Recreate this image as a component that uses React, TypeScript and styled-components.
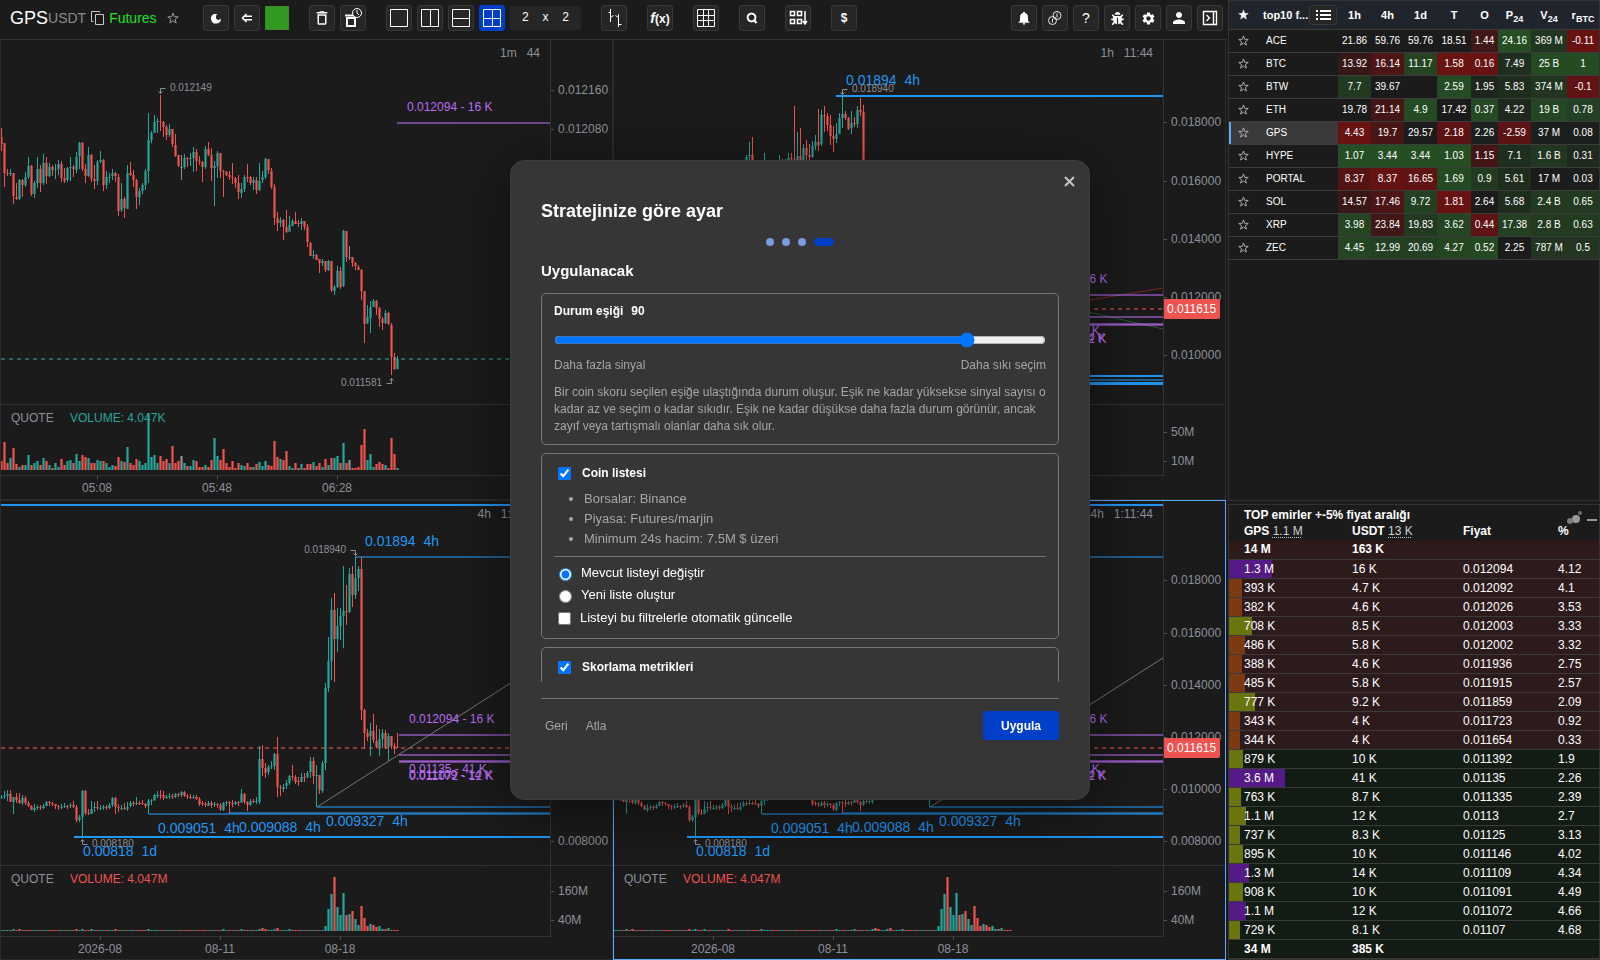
import React from 'react';
import styled, { createGlobalStyle, css } from 'styled-components';
import { MdNotifications, MdSettings, MdPerson, MdDeleteOutline } from 'react-icons/md';
import { FaBug } from 'react-icons/fa';

const GREEN = '#26a69a';
const RED = '#ef5350';
const GRAY = '#8f8f8f';
const BLUE = '#2196f3';
const PURPLE = '#b96cf2';
const MUTED = '#8d909a';
const LINE = '#333333';

const GlobalStyle = createGlobalStyle`
  * { box-sizing: border-box; }
  body {
    margin: 0;
    background: #1b1b1b;
    color: #ffffff;
    font-family: "Liberation Sans", Arial, sans-serif;
    font-size: 12px;
  }
  button, input { font-family: inherit; }
`;

/* ---------- page frame ---------- */

const Page = styled.div`
  display: flex;
  min-height: 100vh;
  gap: 2px;
`;

const Workspace = styled.main`
  flex: 1;
  min-width: 0;
  display: flex;
  flex-direction: column;
`;

const Side = styled.aside`
  width: 372px;
  flex: none;
  display: flex;
  flex-direction: column;
  gap: 3px;
`;

/* ---------- toolbar ---------- */

const Toolbar = styled.header`
  height: 40px;
  flex: none;
  display: flex;
  align-items: flex-start;
  justify-content: space-between;
  padding: 5px 3px 0 10px;
  border-bottom: 1px solid ${LINE};
`;

const Tools = styled.div<{ $gap?: number }>`
  display: flex;
  align-items: center;
  gap: ${(p) => p.$gap ?? 5}px;
`;

const Ticker = styled.div`
  display: flex;
  align-items: center;
  width: 193px;
  height: 26px;
  white-space: nowrap;
`;

const Base = styled.span`
  font-size: 18px;
  line-height: 26px;
`;

const Quote = styled.span`
  font-size: 14px;
  line-height: 28px;
  color: #8c8c8c;
`;

const Market = styled.span`
  font-size: 14px;
  line-height: 26px;
  color: #1fe01f;
`;

const PlainButton = styled.button`
  display: inline-flex;
  align-items: center;
  justify-content: center;
  border: 0;
  padding: 0 5px;
  background: none;
  color: #9a9a9a;
  line-height: 0;
`;

const ToolButton = styled.button<{ $active?: boolean }>`
  display: inline-flex;
  align-items: center;
  justify-content: center;
  width: 26px;
  height: 26px;
  flex: none;
  padding: 0;
  border: 1px solid ${(p) => (p.$active ? '#0040c8' : '#383838')};
  border-radius: 3px;
  background: ${(p) => (p.$active ? '#0040c8' : '#262626')};
  color: #ffffff;
  font-size: 12px;
  line-height: 1;
`;

const ColorSwatch = styled.button`
  width: 24px;
  height: 24px;
  padding: 0;
  border: 1px solid #3c8a2c;
  background: #2f9a1f;
`;

const GridSize = styled.div`
  display: flex;
  align-items: center;
  justify-content: space-between;
  width: 71px;
  height: 24px;
  padding: 0 12px 2px;
  border-radius: 3px;
  background: #262626;
  font-size: 12px;
`;

/* ---------- charts ---------- */

const ChartGrid = styled.div`
  flex: 1;
  display: grid;
  grid-template-columns: 1fr 1fr;
  grid-template-rows: 1fr 1fr;
`;

const Cell = styled.section<{ $active?: boolean; $first?: boolean }>`
  min-width: 0;
  display: flex;
  flex-direction: column;
  border: 1px solid ${(p) => (p.$active ? '#5aa9ff' : '#2b2b2b')};
  ${(p) => p.$first && css`border-top: 0;`}
`;

const Pane = styled.div<{ $volume?: boolean }>`
  display: flex;
  ${(p) => (p.$volume ? css`height: 71px; flex: none; border-top: 1px solid ${LINE};` : css`flex: 1; min-height: 300px;`)}
`;

const Plot = styled.svg`
  flex: 1;
  min-width: 0;
  height: auto;
  overflow: hidden;
  font-size: 12px;
`;

const AxisSvg = styled.svg`
  width: 62px;
  flex: none;
  height: auto;
  border-left: 1px solid ${LINE};
  overflow: hidden;
  font-size: 12px;
`;

const TimeAxis = styled.svg<{ $short?: boolean }>`
  flex: none;
  width: calc(100% - 61px);
  height: ${(p) => (p.$short ? 23 : 24)}px;
  border-top: 1px solid ${LINE};
  font-size: 12px;
`;

type Bar = number[];

/* Each entry: close, high, low, in thirds of a pixel; the open is the previous close. */
const MINUTE: Bar[] = [
  [310, 264, 333], [400, 308, 440], [402, 388, 410], [400, 388, 410], [470, 398, 492], [476, 430, 480], [420, 416, 478],
  [435, 416, 470], [410, 395, 440], [378, 350, 416], [462, 376, 468], [430, 424, 476], [388, 352, 444], [430, 376, 458],
  [370, 342, 434], [408, 350, 430], [382, 368, 410], [392, 376, 408], [388, 372, 416], [372, 360, 404], [414, 362, 426],
  [422, 384, 428], [385, 380, 424], [382, 352, 424], [388, 374, 410], [350, 335, 398], [310, 306, 386], [388, 306, 394],
  [408, 372, 430], [346, 320, 410], [418, 342, 426], [424, 376, 448], [366, 360, 434], [360, 334, 370], [436, 358, 454],
  [412, 392, 446], [410, 398, 428], [400, 388, 420], [410, 396, 426], [512, 402, 528], [478, 430, 518], [506, 472, 536],
  [398, 376, 508], [404, 366, 408], [420, 390, 440], [470, 416, 506], [452, 444, 494], [435, 430, 462], [392, 388, 452],
  [300, 220, 430], [278, 272, 308], [245, 224, 276], [244, 234, 280], [246, 166, 274], [262, 242, 290], [286, 256, 300],
  [268, 252, 292], [314, 266, 320], [346, 282, 352], [380, 344, 380], [380, 345, 420], [354, 342, 386], [356, 350, 380],
  [355, 340, 378], [336, 322, 398], [364, 326, 392], [366, 348, 376], [380, 362, 426], [326, 318, 388], [344, 306, 348],
  [384, 324, 424], [378, 362, 498], [340, 332, 412], [394, 338, 414], [396, 390, 472], [404, 394, 410], [410, 394, 420],
  [414, 368, 430], [430, 410, 444], [458, 404, 476], [446, 430, 476], [410, 406, 456], [412, 372, 426], [430, 408, 436],
  [420, 410, 448], [450, 412, 462], [422, 368, 452], [412, 394, 430], [358, 354, 416], [392, 358, 404], [440, 384, 446],
  [534, 432, 554], [550, 516, 572], [540, 530, 560], [562, 536, 600], [576, 510, 578], [556, 528, 570], [542, 538, 560],
  [550, 516, 552], [552, 540, 560], [544, 534, 570], [562, 542, 568], [608, 552, 620], [646, 606, 648], [644, 630, 656],
  [658, 642, 660], [670, 658, 700], [664, 656, 676], [692, 662, 696], [664, 660, 694], [752, 664, 756], [740, 734, 764],
  [692, 678, 744], [740, 680, 746], [574, 570, 740], [652, 574, 668], [652, 618, 660], [670, 650, 680], [680, 666, 690],
  [690, 676, 692], [752, 686, 780], [850, 752, 908], [832, 796, 852], [800, 782, 878], [782, 776, 800], [804, 780, 824],
  [838, 802, 862], [850, 832, 872], [820, 810, 852], [854, 816, 856], [950, 850, 1006], [986, 940, 990], [956, 948, 986],
];

const HOUR: Bar[] = [
  [470, 466, 500], [466, 426, 490], [500, 411, 510], [510, 500, 512], [511, 500, 512], [512, 500, 513], [490, 459, 510],
  [500, 490, 505], [501, 490, 505], [502, 490, 505], [503, 490, 505], [480, 466, 500], [484, 476, 490], [480, 476, 490],
  [474, 459, 490], [476, 459, 490], [480, 318, 490], [468, 396, 490], [484, 384, 490], [444, 432, 486], [464, 420, 484],
  [470, 432, 490], [438, 422, 474], [426, 404, 448], [434, 327, 452], [346, 330, 437], [348, 318, 396], [374, 339, 392],
  [408, 344, 435], [416, 378, 456], [402, 370, 430], [354, 339, 402], [342, 288, 384], [354, 334, 362], [386, 352, 390],
  [370, 333, 402], [371, 351, 382], [330, 318, 384], [336, 294, 348], [560, 315, 570],
];

const FOUR_HOUR: Bar[] = [
  [350, 346, 358], [349, 334, 358], [342, 330, 364], [366, 330, 366], [352, 352, 404], [360, 338, 368], [370, 340, 374],
  [354, 344, 374], [370, 348, 374], [378, 364, 382], [390, 376, 392], [384, 372, 396], [382, 376, 390], [384, 376, 390],
  [378, 372, 386], [366, 364, 378], [368, 362, 376], [372, 366, 378], [378, 372, 388], [382, 374, 390], [380, 372, 386],
  [378, 370, 384], [380, 374, 386], [376, 368, 384], [382, 362, 384], [420, 376, 428], [410, 404, 424], [332, 330, 468],
  [398, 330, 404], [400, 386, 404], [386, 364, 404], [382, 366, 396], [384, 364, 390], [383, 376, 390], [380, 374, 388],
  [384, 374, 390], [376, 370, 388], [354, 350, 380], [382, 350, 400], [386, 372, 396], [384, 374, 390], [385, 370, 392],
  [380, 366, 392], [370, 362, 380], [372, 364, 378], [368, 350, 374], [370, 364, 376], [372, 360, 376], [378, 368, 384],
  [362, 356, 402], [360, 356, 374], [346, 342, 364], [344, 334, 354], [346, 330, 356], [354, 334, 362], [350, 344, 356],
  [348, 338, 356], [350, 342, 358], [342, 340, 354], [346, 338, 350], [336, 332, 350], [348, 334, 352], [350, 342, 356],
  [354, 342, 358], [350, 346, 358], [356, 346, 362], [370, 352, 378], [372, 362, 378], [376, 366, 382], [368, 362, 376],
  [374, 362, 384], [372, 366, 380], [376, 368, 382], [388, 370, 394], [368, 366, 392], [367, 362, 376], [368, 362, 398],
  [372, 360, 380], [366, 362, 374], [370, 362, 378], [342, 328, 368], [366, 340, 374], [374, 362, 392], [362, 358, 378],
  [366, 358, 370], [364, 350, 370], [236, 198, 372], [264, 196, 290], [278, 250, 296], [262, 254, 284], [258, 244, 268],
  [222, 218, 270], [322, 170, 350], [326, 314, 348], [320, 312, 336], [310, 300, 326], [288, 284, 314], [290, 256, 300],
  [304, 286, 314], [305, 290, 318], [290, 280, 308], [291, 278, 306], [278, 272, 294], [244, 232, 294], [290, 232, 312],
  [286, 254, 380], [332, 284, 342], [248, 244, 340], [24, 10, 270], [-56, -130, 34], [-210, -246, 0], [-124, -260, 8],
  [-162, -215, -84], [-192, -215, -120], [-206, -342, -96], [-204, -286, -166], [-318, -336, -200], [-256, -342, -220],
  [-306, -370, -244], [-332, -342, -266], [90, -368, 122], [158, 86, 206], [170, 146, 182], [154, 130, 230],
  [182, 102, 190], [200, 136, 206], [176, 146, 228], [158, 148, 206], [202, 150, 206], [168, 158, 242], [198, 168, 206],
  [202, 190, 222], [204, 160, 206],
];

const MINUTE_VOLUME = [
  9, 28, 7, 12, 22, 6, 3, 5, 5, 15, 5, 7, 9, 5, 12, 9, 5, 2, 7, 3, 11, 5, 9, 10, 7, 16, 9, 15, 13, 12, 7, 7, 10, 9, 9,
  7, 3, 5, 4, 13, 9, 8, 23, 7, 5, 11, 9, 5, 7, 57, 13, 15, 7, 14, 9, 11, 7, 24, 7, 9, 14, 7, 4, 4, 10, 9, 3, 3, 5, 3,
  10, 32, 14, 10, 21, 7, 3, 9, 2, 7, 5, 4, 7, 3, 3, 6, 8, 4, 9, 5, 4, 29, 13, 11, 10, 19, 4, 2, 7, 2, 6, 2, 6, 6, 8,
  4, 7, 3, 11, 5, 12, 12, 14, 7, 27, 7, 10, 2, 2, 3, 25, 41, 10, 16, 3, 6, 8, 6, 5, 2, 32, 16, 2,
];

const FOUR_HOUR_VOLUME = Array.from({ length: 133 }, (_, i) => {
  const spikes: Record<number, number> = {
    4: 2, 6: 2, 25: 2, 27: 2, 30: 2, 38: 2, 49: 2, 74: 2, 80: 2, 86: 2, 87: 3, 88: 2, 91: 2, 92: 3, 96: 2, 108: 5,
    109: 22, 110: 37, 111: 54, 112: 24, 113: 16, 114: 38, 115: 16, 116: 17, 117: 20, 118: 12, 119: 6, 120: 25,
    121: 13, 122: 5, 123: 7, 124: 6, 125: 4, 126: 5, 127: 2, 128: 2, 129: 3,
  };
  return spikes[i] ?? 1;
});

const direction = (open: number, close: number) => (close === open ? GRAY : close < open ? GREEN : RED);

function Candles({ bars, open, top, from = 0 }: { bars: Bar[]; open: number; top: number; from?: number }) {
  return (
    <g shapeRendering="crispEdges">
      {bars.map(([close, high, low], i) => {
        const start = i ? bars[i - 1][0] : open;
        const color = direction(start, close);
        const x = (from + i) * 3;
        const y = Math.round(top + Math.min(start, close) / 3);
        const h = Math.max(1, Math.round(Math.abs(start - close) / 3));
        return (
          <g key={i} fill={color}>
            <rect x={x - 1} y={y} width={3} height={h} opacity={0.6} />
            <rect x={x} y={Math.round(top + high / 3)} width={1} height={Math.max(1, Math.round((low - high) / 3))} />
          </g>
        );
      })}
    </g>
  );
}

function Volumes({ heights, bars, open }: { heights: number[]; bars: Bar[]; open: number }) {
  return (
    <g shapeRendering="crispEdges">
      {heights.map((h, i) => {
        const color = direction(i ? bars[i - 1][0] : open, bars[i][0]);
        return (
          <g key={i} fill={color}>
            <rect x={i * 3 - 1} y={65 - h} width={3} height={h} opacity={0.6} />
            <rect x={i * 3} y={65 - h} width={1} height={h} />
          </g>
        );
      })}
    </g>
  );
}

function Level({ x, y, color = BLUE, dim, size = 2 }: { x: number; y: number; color?: string; dim?: boolean; size?: number }) {
  return <rect x={x} y={y} width="100%" height={size} fill={color} opacity={dim ? 0.55 : 1} shapeRendering="crispEdges" />;
}

function PriceLine({ y, color }: { y: number; color: string }) {
  return <line x1={0} x2="100%" y1={y} y2={y} stroke={color} strokeWidth={2} strokeDasharray="4 4" opacity={0.55} />;
}

function LevelText({ x, y, children }: { x: number; y: number; children: string }) {
  return <text x={x} y={y} fontSize={14} fill={BLUE}>{children}</text>;
}

function OrderText({ x, y, children }: { x: number; y: number; children: string }) {
  return <text x={x} y={y} fontSize={12} fill={PURPLE}>{children}</text>;
}

/* A small bent arrow with the extreme price beside it. */
function Extreme({ x, y, left, up, price }: { x: number; y: number; left?: boolean; up?: boolean; price: string }) {
  const side = left ? -5 : 5;
  const tip = up ? -5 : 5;
  return (
    <g>
      <path
        d={`M${x + side} ${y}H${x}v${tip}M${x - 2} ${y + tip - Math.sign(tip) * 2}l2 ${Math.sign(tip) * 2}l2 ${-Math.sign(tip) * 2}`}
        transform="translate(0.5 0.5)"
        stroke={MUTED}
        fill="none"
      />
      <text x={left ? x - 9 : x + 10} y={y + 3} fontSize={10} fill={MUTED} textAnchor={left ? 'end' : 'start'}>{price}</text>
    </g>
  );
}

function Axis({ labels, badge }: { labels: [number, string][]; badge?: [number, string] }) {
  return (
    <AxisSvg>
      {labels.map(([y, t]) => (
        <g key={t}>
          <rect x={0} y={y} width={3} height={1} fill="#555555" />
          <text x={7} y={y + 4} fill={MUTED}>{t}</text>
        </g>
      ))}
      {badge && (
        <g>
          <rect x={-3} y={badge[0] - 10} width={59} height={20} rx={2} fill={RED} />
          <text x={3} y={badge[0] + 4} fill="#ffffff">{badge[1]}</text>
        </g>
      )}
    </AxisSvg>
  );
}

function Times({ labels, short }: { labels: [number, string][]; short?: boolean }) {
  return (
    <TimeAxis $short={short}>
      {labels.map(([x, t]) => (
        <g key={t}>
          <rect x={x} y={0} width={1} height={3} fill="#555555" />
          <text x={x} y={16} fill={MUTED} textAnchor="middle">{t}</text>
        </g>
      ))}
    </TimeAxis>
  );
}

function Countdown({ y, children }: { y: number; children: string }) {
  return (
    <svg x="100%" overflow="visible">
      <text x={-10} y={y} textAnchor="end" fill={MUTED}>{children}</text>
    </svg>
  );
}

function VolumeTitle({ value, color }: { value: string; color: string }) {
  return (
    <g>
      <text x={10} y={17} fill={MUTED}>QUOTE</text>
      <text x={69} y={17} fill={color}>{`VOLUME: ${value}`}</text>
    </g>
  );
}

const wide = '\u00a0\u00a0';

function MinuteChart() {
  return (
    <Cell $first>
      <Pane>
        <Plot>
          <PriceLine y={319} color={GREEN} />
          <Candles bars={MINUTE} open={290} top={0} />
          <Level x={396} y={82} color={PURPLE} dim />
          <OrderText x={406} y={71}>0.012094 - 16 K</OrderText>
          <Extreme x={159} y={48} price="0.012149" />
          <Extreme x={390} y={343} left up price="0.011581" />
          <Countdown y={17}>{`1m${wide}\u00a044`}</Countdown>
        </Plot>
        <Axis labels={[[50, '0.012160'], [89, '0.012080']]} />
      </Pane>
      <Pane $volume>
        <Plot>
          <VolumeTitle value="4.047K" color={GREEN} />
          <Volumes heights={MINUTE_VOLUME} bars={MINUTE} open={290} />
        </Plot>
        <Axis labels={[]} />
      </Pane>
      <Times labels={[[96, '05:08'], [216, '05:48'], [336, '06:28']]} />
    </Cell>
  );
}

function HourChart() {
  return (
    <Cell $first>
      <Pane>
        <Plot>
          <PriceLine y={269} color={RED} />
          <Candles bars={HOUR} open={500} top={-40} from={44} />
          <Level x={222} y={55} />
          <LevelText x={232} y={45}>{`0.01894${wide}4h`}</LevelText>
          <Extreme x={228} y={49} price="0.018940" />
          <path d="M356 280L549 248" stroke="#7a2a2a" fill="none" />
          <path d="M356 245L549 289" stroke="#245c2a" fill="none" />
          <Level x={396} y={254} color={PURPLE} dim />
          <Level x={396} y={276} color={PURPLE} dim />
          <Level x={396} y={283} color={PURPLE} dim size={3} />
          <Level x={396} y={284} color={PURPLE} dim size={1} />
          <OrderText x={408} y={243}>0.012094 - 16 K</OrderText>
          <OrderText x={408} y={295}>0.01135 - 41 K</OrderText>
          <OrderText x={408} y={302}>0.011109 - 14 K</OrderText>
          <OrderText x={408} y={303}>0.011072 - 12 K</OrderText>
          <Level x={0} y={335} />
          <Level x={0} y={339} dim />
          <Level x={0} y={342} size={3} />
          <Countdown y={17}>{`1h${wide}\u00a011:44`}</Countdown>
        </Plot>
        <Axis
          labels={[[82, '0.018000'], [141, '0.016000'], [199, '0.014000'], [257, '0.012000'], [315, '0.010000']]}
          badge={[269, '0.011615']}
        />
      </Pane>
      <Pane $volume>
        <Plot />
        <Axis labels={[[27, '50M'], [56, '10M']]} />
      </Pane>
      <Times labels={[]} />
    </Cell>
  );
}

function FourHourChart({ active }: { active?: boolean }) {
  return (
    <Cell $active={active}>
      <Pane>
        <Plot>
          <PriceLine y={247} color={RED} />
          <Candles bars={FOUR_HOUR} open={352} top={179} />
          <Level x={0} y={3} />
          <Level x={354} y={55} dim />
          <LevelText x={364} y={45}>{`0.01894${wide}4h`}</LevelText>
          <Extreme x={354} y={49} left price="0.018940" />
          <path d="M316 306L1016 -142" stroke="#767676" fill="none" />
          <Level x={398} y={233} color={PURPLE} dim />
          <Level x={398} y={253} color={PURPLE} dim />
          <Level x={398} y={259} color={PURPLE} dim size={3} />
          <Level x={398} y={260} color={PURPLE} dim size={1} />
          <OrderText x={408} y={222}>0.012094 - 16 K</OrderText>
          <OrderText x={408} y={272}>0.01135 - 41 K</OrderText>
          <OrderText x={408} y={278}>0.011109 - 14 K</OrderText>
          <OrderText x={408} y={279}>0.011072 - 12 K</OrderText>
          <Level x={316} y={305} dim />
          <Level x={228} y={311} dim />
          <Level x={148} y={312} dim />
          <Level x={73} y={335} />
          <LevelText x={157} y={332}>{`0.009051${wide}4h`}</LevelText>
          <LevelText x={238} y={331}>{`0.009088${wide}4h`}</LevelText>
          <LevelText x={325} y={325}>{`0.009327${wide}4h`}</LevelText>
          <Extreme x={81} y={343} up price="0.008180" />
          <LevelText x={82} y={355}>{`0.00818${wide}1d`}</LevelText>
          <Countdown y={17}>{`4h${wide}\u00a01:11:44`}</Countdown>
        </Plot>
        <Axis
          labels={[[79, '0.018000'], [132, '0.016000'], [184, '0.014000'], [236, '0.012000'], [288, '0.010000'], [340, '0.008000']]}
          badge={[247, '0.011615']}
        />
      </Pane>
      <Pane $volume>
        <Plot>
          <VolumeTitle value="4.047M" color={RED} />
          <Volumes heights={FOUR_HOUR_VOLUME} bars={FOUR_HOUR} open={352} />
        </Plot>
        <Axis labels={[[25, '160M'], [54, '40M']]} />
      </Pane>
      <Times short labels={[[99, '2026-08'], [219, '08-11'], [339, '08-18']]} />
    </Cell>
  );
}

/* ---------- watch list ---------- */

const Panel = styled.section<{ $grow?: boolean }>`
  border: 1px solid ${LINE};
  ${(p) => p.$grow && css`flex: 1;`}
`;

const WatchTable = styled.table`
  width: 100%;
  table-layout: fixed;
  border-collapse: collapse;
  font-size: 10px;
`;

const WatchHead = styled.th<{ $left?: boolean }>`
  height: 28px;
  padding: 0;
  border-bottom: 1px solid #3c3c3c;
  background: #20252d;
  font-size: 11px;
  font-weight: bold;
  line-height: 12px;
  text-align: ${(p) => (p.$left ? 'left' : 'center')};
  white-space: nowrap;

  sub { font-size: 9px; line-height: 0; }
`;

const NameHead = styled.div`
  display: flex;
  align-items: center;
  justify-content: space-between;
  padding: 0 1px 0 5px;
`;

const ListButton = styled(ToolButton)`
  width: 28px;
  height: 20px;
`;

const WatchRow = styled.tr<{ $active?: boolean }>`
  height: 23px;
  background: ${(p) => (p.$active ? '#3a3a3a' : 'transparent')};
  ${(p) => p.$active && css`box-shadow: inset 2px 0 0 #5aa9ff;`}
`;

const WatchCell = styled.td<{ $tint?: string; $left?: boolean }>`
  padding: ${(p) => (p.$left ? '0 0 0 8px' : '0')};
  border-bottom: 1px solid #3c3c3c;
  background: ${(p) => p.$tint ?? 'transparent'};
  text-align: ${(p) => (p.$left ? 'left' : 'center')};
  white-space: nowrap;
`;

const StarButton = styled.button`
  display: block;
  margin: 0 auto;
  padding: 0;
  border: 0;
  background: none;
  line-height: 0;
`;

/* Strength from -1 (red) to 1 (green), mixed over the panel colour. */
const tint = (v: number) => {
  const to = v < 0 ? [104, 18, 18] : [38, 78, 36];
  const mix = to.map((c) => Math.round(27 + (c - 27) * Math.abs(v)));
  return `rgb(${mix.join(',')})`;
};

const WATCH: { name: string; cells: [string, number][] }[] = [
  { name: 'ACE', cells: [['21.86', 0], ['59.76', 0], ['59.76', 0], ['18.51', 0], ['1.44', -0.5], ['24.16', 1], ['369 M', 0.5], ['-0.11', -1]] },
  { name: 'BTC', cells: [['13.92', -0.35], ['16.14', -0.65], ['11.17', 0.8], ['1.58', -1], ['0.16', -1], ['7.49', 0.4], ['25 B', 0.95], ['1', 0.95]] },
  { name: 'BTW', cells: [['7.7', 0.6], ['39.67', 0], ['', 0], ['2.59', 0.95], ['1.95', 0.2], ['5.83', 0.35], ['374 M', 0.5], ['-0.1', -0.9]] },
  { name: 'ETH', cells: [['19.78', 0], ['21.14', -0.55], ['4.9', 0.95], ['17.42', 0], ['0.37', 0.9], ['4.22', 0.25], ['19 B', 0.85], ['0.78', 0.75]] },
  { name: 'GPS', cells: [['4.43', -1], ['19.7', -0.6], ['29.57', 0.01], ['2.18', -0.85], ['2.26', 0.1], ['-2.59', -0.85], ['37 M', 0.1], ['0.08', 0.1]] },
  { name: 'HYPE', cells: [['1.07', 1], ['3.44', 1], ['3.44', 1], ['1.03', 1], ['1.15', -0.55], ['7.1', 0.4], ['1.6 B', 0.55], ['0.31', 0.3]] },
  { name: 'PORTAL', cells: [['8.37', -0.75], ['8.37', -0.95], ['16.65', -0.9], ['1.69', 0.9], ['0.9', 0.6], ['5.61', 0.35], ['17 M', 0], ['0.03', 0.05]] },
  { name: 'SOL', cells: [['14.57', -0.4], ['17.46', -0.65], ['9.72', 0.75], ['1.81', -1], ['2.64', 0], ['5.68', 0.35], ['2.4 B', 0.6], ['0.65', 0.6]] },
  { name: 'XRP', cells: [['3.98', 0.8], ['23.84', -0.5], ['19.83', 0.6], ['3.62', 0.8], ['0.44', -0.9], ['17.38', 0.75], ['2.8 B', 0.6], ['0.63', 0.6]] },
  { name: 'ZEC', cells: [['4.45', 0.8], ['12.99', 0.75], ['20.69', 0.75], ['4.27', 0.8], ['0.52', 0.9], ['2.25', 0], ['787 M', 0.5], ['0.5', 0.5]] },
];

function Star({ filled, size = 11 }: { filled?: boolean; size?: number }) {
  return (
    <svg width={size} height={size} viewBox="0 0 12 12">
      <path
        d="M6 1l1.300 3.700 3.900.1-3.100 2.400 1.100 3.800L6 8.800 2.800 11l1.100-3.800L.8 4.800l3.900-.1z"
        fill={filled ? '#ffffff' : 'none'}
        stroke={filled ? '#ffffff' : '#b4b4b4'}
        strokeWidth={filled ? 0.5 : 1}
      />
    </svg>
  );
}

function WatchList() {
  return (
    <Panel $grow>
      <WatchTable>
        <colgroup>
          <col style={{ width: 29 }} />
          <col />
          {[33, 33, 33, 34, 27, 33, 36, 32].map((w, i) => <col key={i} style={{ width: w }} />)}
        </colgroup>
        <thead>
          <tr>
            <WatchHead><StarButton aria-label="Favoriler"><Star filled /></StarButton></WatchHead>
            <WatchHead $left>
              <NameHead>
                top10 f...
                <ListButton aria-label="Liste">
                  <svg width="16" height="12" fill="#ffffff">
                    <path d="M1 1h2v2H1zM5 1h11v2H5zM1 5h2v2H1zM5 5h11v2H5zM1 9h2v2H1zM5 9h11v2H5z" />
                  </svg>
                </ListButton>
              </NameHead>
            </WatchHead>
            <WatchHead>1h</WatchHead>
            <WatchHead>4h</WatchHead>
            <WatchHead>1d</WatchHead>
            <WatchHead>T</WatchHead>
            <WatchHead>O</WatchHead>
            <WatchHead>P<sub>24</sub></WatchHead>
            <WatchHead>V<sub>24</sub></WatchHead>
            <WatchHead>r<sub>BTC</sub></WatchHead>
          </tr>
        </thead>
        <tbody>
          {WATCH.map((row) => (
            <WatchRow key={row.name} $active={row.name === 'GPS'}>
              <WatchCell><StarButton aria-label={`Favori ${row.name}`}><Star /></StarButton></WatchCell>
              <WatchCell $left>{row.name}</WatchCell>
              {row.cells.map(([text, v], i) => (
                <WatchCell key={i} $tint={tint(v)}>{text}</WatchCell>
              ))}
            </WatchRow>
          ))}
        </tbody>
      </WatchTable>
    </Panel>
  );
}

/* ---------- order book ---------- */

const OrdersTitle = styled.div`
  display: flex;
  justify-content: space-between;
  height: 18px;
  padding: 0 2px 0 15px;
  font-weight: bold;
  line-height: 20px;
`;

const OrdersTable = styled.table`
  width: 100%;
  table-layout: fixed;
  border-collapse: collapse;
  line-height: 17px;

  th { text-align: left; height: 18px; padding: 0; }
  th:first-child { padding-left: 15px; }
  th u { font-weight: normal; text-decoration: underline dotted; text-underline-offset: 2px; color: #d0d0d0; }
`;

const OrderRow = styled.tr<{ $side: 'ask' | 'bid'; $total?: boolean }>`
  height: 19px;
  background: ${(p) => (p.$side === 'ask' ? '#2d1b1c' : '#131c14')};
  font-weight: ${(p) => (p.$total ? 'bold' : 'normal')};

  td { padding: 0; border-bottom: 1px solid #3a3a3a; }
`;

const Amount = styled.td<{ $bar?: number; $color?: string }>`
  && {
    padding-left: 15px;
    background: ${(p) => (p.$bar ? `linear-gradient(${p.$color}, ${p.$color}) 0 0 / ${p.$bar}px 100% no-repeat` : 'none')};
  }
`;

const VIOLET = '#541a86';
const RUST = '#7b3a12';
const OLIVE = '#6a750f';

const ORDERS: [string, string, string, string, number, string][] = [
  ['1.3 M', '16 K', '0.012094', '4.12', 43, VIOLET],
  ['393 K', '4.7 K', '0.012092', '4.1', 13, RUST],
  ['382 K', '4.6 K', '0.012026', '3.53', 13, RUST],
  ['708 K', '8.5 K', '0.012003', '3.33', 23, OLIVE],
  ['486 K', '5.8 K', '0.012002', '3.32', 16, RUST],
  ['388 K', '4.6 K', '0.011936', '2.75', 13, RUST],
  ['485 K', '5.8 K', '0.011915', '2.57', 16, RUST],
  ['777 K', '9.2 K', '0.011859', '2.09', 26, OLIVE],
  ['343 K', '4 K', '0.011723', '0.92', 11, RUST],
  ['344 K', '4 K', '0.011654', '0.33', 11, RUST],
  ['879 K', '10 K', '0.011392', '1.9', 14, OLIVE],
  ['3.6 M', '41 K', '0.01135', '2.26', 56, VIOLET],
  ['763 K', '8.7 K', '0.011335', '2.39', 12, OLIVE],
  ['1.1 M', '12 K', '0.0113', '2.7', 17, OLIVE],
  ['737 K', '8.3 K', '0.01125', '3.13', 11, OLIVE],
  ['895 K', '10 K', '0.011146', '4.02', 14, OLIVE],
  ['1.3 M', '14 K', '0.011109', '4.34', 20, VIOLET],
  ['908 K', '10 K', '0.011091', '4.49', 14, OLIVE],
  ['1.1 M', '12 K', '0.011072', '4.66', 17, VIOLET],
  ['729 K', '8.1 K', '0.01107', '4.68', 11, OLIVE],
];

function Orders() {
  return (
    <Panel>
      <OrdersTitle>
        TOP emirler +-5% fiyat aralığı
        <svg width="30" height="20" fill="#9a9a9a">
          <circle cx="9" cy="14" r="4" />
          <circle cx="3" cy="16" r="3" fill="#7c7c7c" />
          <circle cx="13" cy="8" r="2" fill="#6c6c6c" />
          <rect x="20" y="14" width="10" height="2" />
        </svg>
      </OrdersTitle>
      <OrdersTable>
        <colgroup>
          <col style={{ width: 123 }} />
          <col style={{ width: 111 }} />
          <col style={{ width: 95 }} />
          <col />
        </colgroup>
        <thead>
          <tr>
            <th>GPS <u>1.1 M</u></th>
            <th>USDT <u>13 K</u></th>
            <th>Fiyat</th>
            <th>%</th>
          </tr>
        </thead>
        <tbody>
          <OrderRow $side="ask" $total><Amount>14 M</Amount><td>163 K</td><td /><td /></OrderRow>
          {ORDERS.map(([amount, usdt, price, pct, bar, color], i) => (
            <OrderRow key={i} $side={i < 10 ? 'ask' : 'bid'}>
              <Amount $bar={bar} $color={color}>{amount}</Amount>
              <td>{usdt}</td>
              <td>{price}</td>
              <td>{pct}</td>
            </OrderRow>
          ))}
          <OrderRow $side="bid" $total><Amount>34 M</Amount><td>385 K</td><td /><td /></OrderRow>
        </tbody>
      </OrdersTable>
    </Panel>
  );
}

/* ---------- dialog ---------- */

const Overlay = styled.div`
  position: fixed;
  inset: 0;
  display: flex;
  align-items: center;
  justify-content: center;
`;

const Dialog = styled.div`
  position: relative;
  display: flex;
  flex-direction: column;
  width: 580px;
  max-width: 100%;
  height: 640px;
  max-height: 100%;
  padding: 30px;
  border: 1px solid #3d3d3d;
  border-radius: 14px;
  background: #363636;
  box-shadow: 0 10px 60px rgba(0, 0, 0, 0.5);
`;

const CloseButton = styled.button`
  position: absolute;
  top: 10px;
  right: 10px;
  width: 20px;
  height: 20px;
  padding: 0;
  border: 0;
  background: none;
  line-height: 0;
`;

const Title = styled.h2`
  margin: 0;
  font-size: 18px;
  line-height: 40px;
`;

const Steps = styled.div`
  display: flex;
  justify-content: center;
  gap: 8px;
  margin: 7px 0 11px;
`;

const Step = styled.span<{ $current?: boolean }>`
  width: ${(p) => (p.$current ? 20 : 8)}px;
  height: 8px;
  border-radius: 4px;
  background: ${(p) => (p.$current ? '#0040c8' : '#7b98e3')};
`;

const Scroll = styled.div`
  flex: 1;
  min-height: 0;
  overflow: hidden;
`;

const Subtitle = styled.h3`
  margin: 0 0 8px;
  font-size: 15px;
  line-height: 28px;
`;

const Card = styled.section`
  margin-bottom: 8px;
  padding: 9px 12px 8px;
  border: 1px solid #767676;
  border-radius: 5px;
`;

const ThresholdLabel = styled.label`
  display: flex;
  gap: 8px;
  font-weight: bold;
  line-height: 17px;
`;

const Range = styled.input`
  display: block;
  width: 100%;
  height: 16px;
  margin: 12px 0 9px;
`;

const RangeEnds = styled.div`
  display: flex;
  justify-content: space-between;
  color: #a6a6a6;
  line-height: 17px;
`;

const Note = styled.p`
  margin: 10px 0 1px;
  color: #a6a6a6;
  line-height: 17px;
`;

const CheckHead = styled.label`
  display: flex;
  align-items: center;
  gap: 11px;
  padding-left: 4px;
  font-weight: bold;
  line-height: 21px;

  input { margin: 0; }
`;

const Filters = styled.ul`
  margin: 5px 0 7px;
  padding-left: 30px;
  color: #a6a6a6;
  font-size: 13px;
  line-height: 20px;
`;

const Options = styled.div`
  padding-top: 5px;
  border-top: 1px solid #767676;
  font-size: 13px;
`;

const Option = styled.label<{ $check?: boolean }>`
  display: flex;
  align-items: center;
  gap: 9px;
  padding-left: ${(p) => (p.$check ? 4 : 5)}px;
  line-height: ${(p) => (p.$check ? 24 : 22)}px;

  input { margin: ${(p) => (p.$check ? 0 : '3px 0 0')}; }
`;

const Footer = styled.footer`
  display: flex;
  justify-content: space-between;
  align-items: flex-start;
  margin-top: 16px;
  padding: 12px 0 29px;
  border-top: 1px solid #767676;
`;

const TextButton = styled.button`
  height: 29px;
  padding: 0 4px;
  margin-right: 10px;
  border: 0;
  background: none;
  color: #a6a6a6;
  font-size: 12px;
`;

const ApplyButton = styled.button`
  width: 76px;
  height: 29px;
  border: 0;
  border-radius: 3px;
  background: #0040c8;
  color: #ffffff;
  font-size: 12px;
  font-weight: bold;
`;

function StrategyDialog() {
  return (
    <Overlay>
      <Dialog role="dialog" aria-labelledby="dialog-title">
        <CloseButton aria-label="Kapat">
          <svg width="11" height="11" stroke="#c4c4c4" strokeWidth="2"><path d="M1 1l9 9M10 1l-9 9" /></svg>
        </CloseButton>
        <Title id="dialog-title">Stratejinize göre ayar</Title>
        <Steps><Step /><Step /><Step /><Step $current /></Steps>
        <Scroll>
          <Subtitle>Uygulanacak</Subtitle>
          <Card>
            <ThresholdLabel htmlFor="threshold"><span>Durum eşiği</span><span>90</span></ThresholdLabel>
            <Range id="threshold" type="range" min={50} max={97} defaultValue={90} />
            <RangeEnds><span>Daha fazla sinyal</span><span>Daha sıkı seçim</span></RangeEnds>
            <Note>
              Bir coin skoru seçilen eşiğe ulaştığında durum oluşur. Eşik ne kadar yüksekse sinyal sayısı o kadar az ve
              seçim o kadar sıkıdır. Eşik ne kadar düşükse daha fazla durum görünür, ancak zayıf veya tartışmalı olanlar
              daha sık olur.
            </Note>
          </Card>
          <Card>
            <CheckHead><input type="checkbox" defaultChecked />Coin listesi</CheckHead>
            <Filters>
              <li>Borsalar: Binance</li>
              <li>Piyasa: Futures/marjin</li>
              <li>Minimum 24s hacim: 7.5M $ üzeri</li>
            </Filters>
            <Options>
              <Option><input type="radio" name="list" defaultChecked />Mevcut listeyi değiştir</Option>
              <Option><input type="radio" name="list" />Yeni liste oluştur</Option>
              <Option $check><input type="checkbox" />Listeyi bu filtrelerle otomatik güncelle</Option>
            </Options>
          </Card>
          <Card>
            <CheckHead><input type="checkbox" defaultChecked />Skorlama metrikleri</CheckHead>
            <Filters />
          </Card>
        </Scroll>
        <Footer>
          <div><TextButton>Geri</TextButton><TextButton>Atla</TextButton></div>
          <ApplyButton>Uygula</ApplyButton>
        </Footer>
      </Dialog>
    </Overlay>
  );
}

/* ---------- toolbar content ---------- */

function Glyph({ d, size = 20, width = 1, fill }: { d: string; size?: number; width?: number; fill?: boolean }) {
  return (
    <svg width={size} height={size} viewBox={`0 0 ${size} ${size}`}>
      <path d={d} fill={fill ? '#ffffff' : 'none'} stroke={fill ? 'none' : '#ffffff'} strokeWidth={width} />
    </svg>
  );
}

const Fx = styled.span`
  font-size: 12px;
  font-weight: bold;
  i { font-size: 14px; }
`;

const Sign = styled.span<{ $size: number; $bold?: boolean }>`
  font-size: ${(p) => p.$size}px;
  font-weight: ${(p) => (p.$bold ? 'bold' : 'normal')};
`;

function TopBar() {
  return (
    <Toolbar>
      <Tools $gap={0}>
        <Ticker>
          <Base>GPS</Base>
          <Quote>USDT</Quote>
          <PlainButton aria-label="Kopyala">
            <svg width="13" height="14" fill="none" stroke="#c8c8c8"><path d="M4.500 3.500h8v10h-8zM2.500 10.500h-2v-10h8v1" /></svg>
          </PlainButton>
          <Market>Futures</Market>
          <PlainButton aria-label="Favori"><svg width="18" height="12"><g transform="translate(5 0)"><path d="M6 1l1.300 3.700 3.900.1-3.100 2.400 1.100 3.800L6 8.800 2.800 11l1.100-3.800L.8 4.800l3.900-.1z" fill="none" stroke="#9a9a9a" /></g></svg></PlainButton>
        </Ticker>
        <Tools $gap={20}>
          <Tools>
            <ToolButton aria-label="Tema"><Glyph fill d="M8 6A5 5 0 1 0 15 10.500A3 3 0 0 1 12.500 12A3 3 0 0 1 10 8.500A2.500 2.500 0 0 1 11.500 6z" /></ToolButton>
            <ToolButton aria-label="Geri al"><Glyph width={1.6} d="M9.500 6L5.500 10L9.500 14M7.500 8.200H15M7.500 11.800H15" /></ToolButton>
            <ColorSwatch aria-label="Renk" />
          </Tools>
          <Tools>
            <ToolButton aria-label="Sil"><MdDeleteOutline size={18} /></ToolButton>
            <ToolButton aria-label="Zamanlı sil">
              <svg width="20" height="22" fill="none" stroke="#ffffff">
                <path d="M4 11h8v8H4zM2 8.500h9" strokeWidth="2" />
                <circle cx="14" cy="6" r="4.500" fill="#262626" />
                <path d="M14 3v3l2 2" />
              </svg>
            </ToolButton>
          </Tools>
          <Tools>
            <ToolButton aria-label="1x1"><Glyph d="M1.500 1.500h17v17h-17z" /></ToolButton>
            <ToolButton aria-label="1x2"><Glyph d="M1.500 1.500h17v17h-17zM10.500 1.500v17" /></ToolButton>
            <ToolButton aria-label="2x1"><Glyph d="M1.500 1.500h17v17h-17zM1.500 10.500h17" /></ToolButton>
            <ToolButton aria-label="2x2" $active><Glyph d="M1.500 1.500h17v17h-17zM10.500 1.500v17M1.500 10.500h17" /></ToolButton>
            <GridSize><span>2</span><span>x</span><span>2</span></GridSize>
          </Tools>
          <ToolButton aria-label="Mumlar"><Glyph d="M6.500 1v13M6.500 4.500h-2M6.500 9.500l3-2M14.500 6v13M14.500 9.500l-3-2M14.500 16.500h3" /></ToolButton>
          <ToolButton aria-label="Göstergeler"><Fx><i>f</i>(x)</Fx></ToolButton>
          <ToolButton aria-label="Izgara"><Glyph d="M1.500 1.500h17v17h-17zM7.500 1.500v17M12.500 1.500v17M1.500 7.500h17M1.500 12.500h17" /></ToolButton>
          <ToolButton aria-label="Ara"><Glyph width={2} d="M9.500 5.500a4 4 0 1 0 .1 0M11.500 11.500l3 3.500" /></ToolButton>
          <ToolButton aria-label="Sırala"><Glyph width={1.5} d="M2.500 3.500h4v4h-4zM9.500 3.500h4v4h-4zM2.500 11.500h4v4h-4zM9.500 11.500h4v4h-4zM17 3v12M15 13l2 3l2-3" /></ToolButton>
          <ToolButton aria-label="Fiyat"><Sign $size={12} $bold>$</Sign></ToolButton>
        </Tools>
      </Tools>
      <Tools>
        <ToolButton aria-label="Bildirimler"><MdNotifications size={16} /></ToolButton>
        <ToolButton aria-label="Bağlantı">
          <svg width="16" height="16" fill="none" stroke="#e8e8e8">
            <circle cx="10" cy="5.500" r="4" />
            <path d="M10 3.500v4M5.500 8.500v4" />
            <circle cx="5.500" cy="10.500" r="4" />
          </svg>
        </ToolButton>
        <ToolButton aria-label="Yardım"><Sign $size={14}>?</Sign></ToolButton>
        <ToolButton aria-label="Hata bildir"><FaBug size={13} /></ToolButton>
        <ToolButton aria-label="Ayarlar"><MdSettings size={15} /></ToolButton>
        <ToolButton aria-label="Hesap"><MdPerson size={18} /></ToolButton>
        <ToolButton aria-label="Paneli gizle"><Glyph size={16} width={1.4} d="M1.500 1.500h13v13h-13zM11.500 1.500v13M4.500 5l3 3l-3 3" /></ToolButton>
      </Tools>
    </Toolbar>
  );
}

export default function App() {
  return (
    <>
      <GlobalStyle />
      <Page>
        <Workspace>
          <TopBar />
          <ChartGrid>
            <MinuteChart />
            <HourChart />
            <FourHourChart />
            <FourHourChart active />
          </ChartGrid>
        </Workspace>
        <Side>
          <WatchList />
          <Orders />
        </Side>
      </Page>
      <StrategyDialog />
    </>
  );
}
